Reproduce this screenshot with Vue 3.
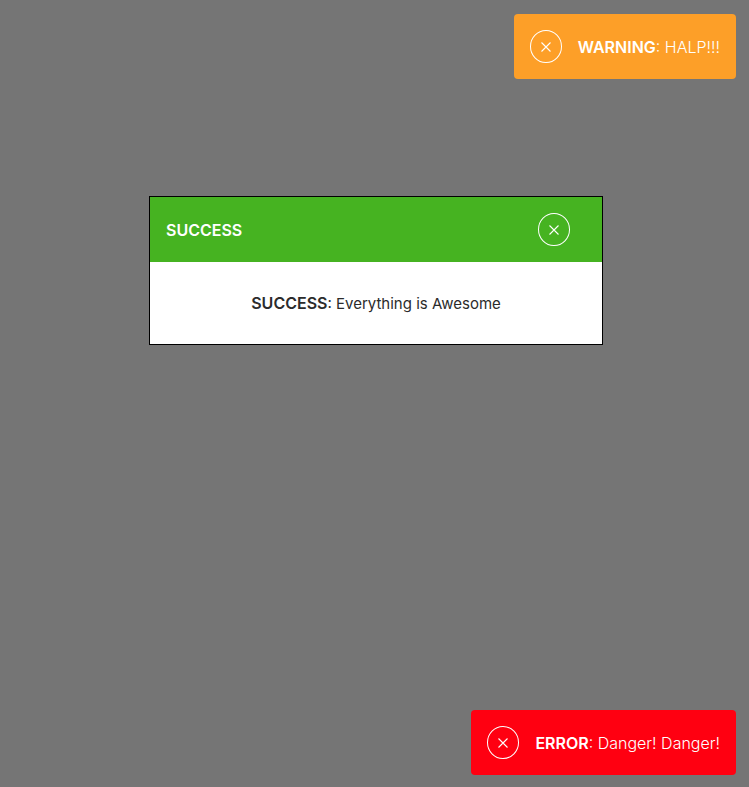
<script setup>
import { ref } from 'vue'

const warning = ref({ label: 'WARNING', text: 'HALP!!!' })
const success = ref({ label: 'SUCCESS', text: 'Everything is Awesome' })
const error = ref({ label: 'ERROR', text: 'Danger! Danger!' })
</script>

<template>
  <main class="overlay">
    <div class="slot slot-top">
      <div v-if="warning" class="toast warning" role="alert">
        <button class="close" type="button" aria-label="Close" @click="warning = null">
          <svg class="cross" viewBox="0 0 10 10" aria-hidden="true"><path d="M0.5 0.5 9.5 9.5M9.5 0.5 0.5 9.5" /></svg>
        </button>
        <p class="message"><strong>{{ warning.label }}</strong>: {{ warning.text }}</p>
      </div>
    </div>

    <section v-if="success" class="modal" role="dialog" aria-labelledby="modal-title">
      <header class="modal-header">
        <h2 id="modal-title" class="title">{{ success.label }}</h2>
        <button class="close" type="button" aria-label="Close" @click="success = null">
          <svg class="cross" viewBox="0 0 10 10" aria-hidden="true"><path d="M0.5 0.5 9.5 9.5M9.5 0.5 0.5 9.5" /></svg>
        </button>
      </header>
      <p class="message modal-body"><strong>{{ success.label }}</strong>: {{ success.text }}</p>
    </section>

    <div class="slot slot-bottom">
      <div v-if="error" class="toast error" role="alert">
        <button class="close" type="button" aria-label="Close" @click="error = null">
          <svg class="cross" viewBox="0 0 10 10" aria-hidden="true"><path d="M0.5 0.5 9.5 9.5M9.5 0.5 0.5 9.5" /></svg>
        </button>
        <p class="message"><strong>{{ error.label }}</strong>: {{ error.text }}</p>
      </div>
    </div>
  </main>
</template>

<style>
body {
  background: #757575;
}
</style>

<style scoped>
.overlay {
  box-sizing: border-box;
  display: flex;
  flex-direction: column;
  min-height: 100vh;
  padding: 14px 13px 12px 16px;
  background: #757575;
  color: #2b2b2b;
  font-family: Inter, "Liberation Sans", sans-serif;
  font-size: 16px;
  line-height: 24px;
}

.slot {
  display: flex;
  justify-content: flex-end;
}

.slot-bottom {
  margin-top: auto;
}

.toast {
  display: flex;
  align-items: center;
  gap: 16px;
  padding: 16px;
  border-radius: 4px;
  color: #fff;
}

.warning {
  background: #fd9f28;
}

.error {
  background: #ff0011;
}

.message {
  margin: 0;
  font-weight: 300;
}

strong,
.title {
  font-size: 16px;
  font-weight: 600;
  line-height: 20px;
}

.modal {
  align-self: center;
  box-sizing: border-box;
  width: 100%;
  max-width: 454px;
  margin: 117px 0 24px;
  border: 1px solid #000;
  background: #fff;
}

.modal-header {
  display: flex;
  align-items: center;
  justify-content: space-between;
  padding: 16px 32px 16px 16px;
  background: #46b321;
  color: #fff;
}

.title {
  margin: 0;
}

.modal-body {
  padding: 30px 16px 28px;
  text-align: center;
  font-size: 15px;
  font-weight: 400;
}

.close {
  box-sizing: border-box;
  display: flex;
  flex: none;
  align-items: center;
  justify-content: center;
  width: 32px;
  height: 33px;
  padding: 0;
  border: 1px solid #fff;
  border-radius: 50%;
  background: transparent;
  color: inherit;
  cursor: pointer;
}

.cross {
  display: block;
  width: 10px;
  height: 10px;
  fill: none;
  stroke: currentColor;
  stroke-width: 1.1;
}
</style>
